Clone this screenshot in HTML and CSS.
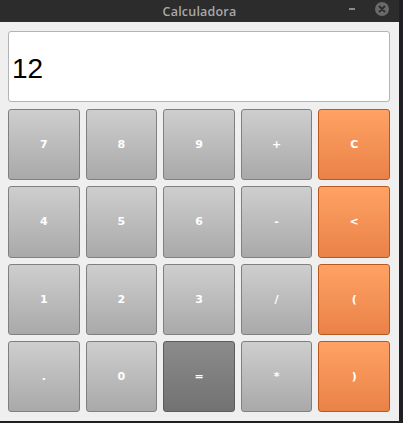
FILE: index.html
```html
<!DOCTYPE html>
<html>
<head>
<meta charset="utf-8">
<link rel="stylesheet" href="styles.css">
</head>
<body>
<div class="window">
  <div class="titlebar">
    <span class="title">Calculadora</span>
    <span class="minimize"></span>
    <span class="close">
      <svg width="14" height="14" viewBox="0 0 14 14"><circle cx="7" cy="7" r="7" fill="#6a6a6a"/><path d="M4.5 4.5 L9.5 9.5 M9.5 4.5 L4.5 9.5" stroke="#2c2c2c" stroke-width="1.8" stroke-linecap="round"/></svg>
    </span>
  </div>
  <div class="content">
    <div class="display">12</div>
    <div class="keys">
      <button class="key">7</button>
      <button class="key">8</button>
      <button class="key">9</button>
      <button class="key">+</button>
      <button class="key orange">C</button>
      <button class="key">4</button>
      <button class="key">5</button>
      <button class="key">6</button>
      <button class="key">-</button>
      <button class="key orange">&lt;</button>
      <button class="key">1</button>
      <button class="key">2</button>
      <button class="key">3</button>
      <button class="key">/</button>
      <button class="key orange">(</button>
      <button class="key">.</button>
      <button class="key">0</button>
      <button class="key dark">=</button>
      <button class="key">*</button>
      <button class="key orange">)</button>
    </div>
  </div>
</div>
</body>
</html>
```
FILE: styles.css
```css
html, body {
  margin: 0;
  padding: 0;
  background: #1e2024;
  width: 403px;
  height: 423px;
  overflow: hidden;
}
.window {
  width: 399px;
  height: 421px;
  display: flex;
  flex-direction: column;
  background: #efefef;
}
.titlebar {
  height: 22px;
  background: #2c2c2c;
  position: relative;
  display: flex;
  align-items: center;
  justify-content: center;
}
.title {
  font-family: "Open Sans", "DejaVu Sans", sans-serif;
  font-weight: 600;
  font-size: 12.5px;
  color: #a8a8a8;
  letter-spacing: 0.2px;
}
.minimize {
  position: absolute;
  left: 349px;
  top: 8px;
  width: 6px;
  height: 2px;
  background: #8a8a8a;
}
.close {
  position: absolute;
  left: 375px;
  top: 2px;
  width: 14px;
  height: 14px;
  line-height: 0;
}
.content {
  flex: 1;
  padding: 9px 9px 9px 8px;
  display: flex;
  flex-direction: column;
  gap: 7px;
}
.display {
  height: 71px;
  box-sizing: border-box;
  flex: none;
  background: #ffffff;
  border: 1px solid #b4b4b4;
  border-radius: 3px;
  font-family: "Liberation Sans", Arial, sans-serif;
  font-size: 28px;
  color: #000;
  display: flex;
  align-items: center;
  padding-left: 3px;
  padding-top: 5px;
}
.keys {
  flex: 1;
  display: grid;
  grid-template-columns: repeat(5, 1fr);
  grid-template-rows: repeat(4, 1fr);
  column-gap: 6px;
  row-gap: 6px;
}
.key {
  margin: 0;
  padding: 0;
  border: 1px solid #808080;
  border-radius: 3px;
  background: linear-gradient(#cecece, #a9a9a9);
  color: #ffffff;
  font-family: "DejaVu Sans", sans-serif;
  font-weight: bold;
  font-size: 11px;
}
.key.orange {
  border-color: #b8581f;
  background: linear-gradient(#ffa264, #ea8248);
}
.key.dark {
  border-color: #5c5c5c;
  background: linear-gradient(#8b8b8b, #727272);
}
```
